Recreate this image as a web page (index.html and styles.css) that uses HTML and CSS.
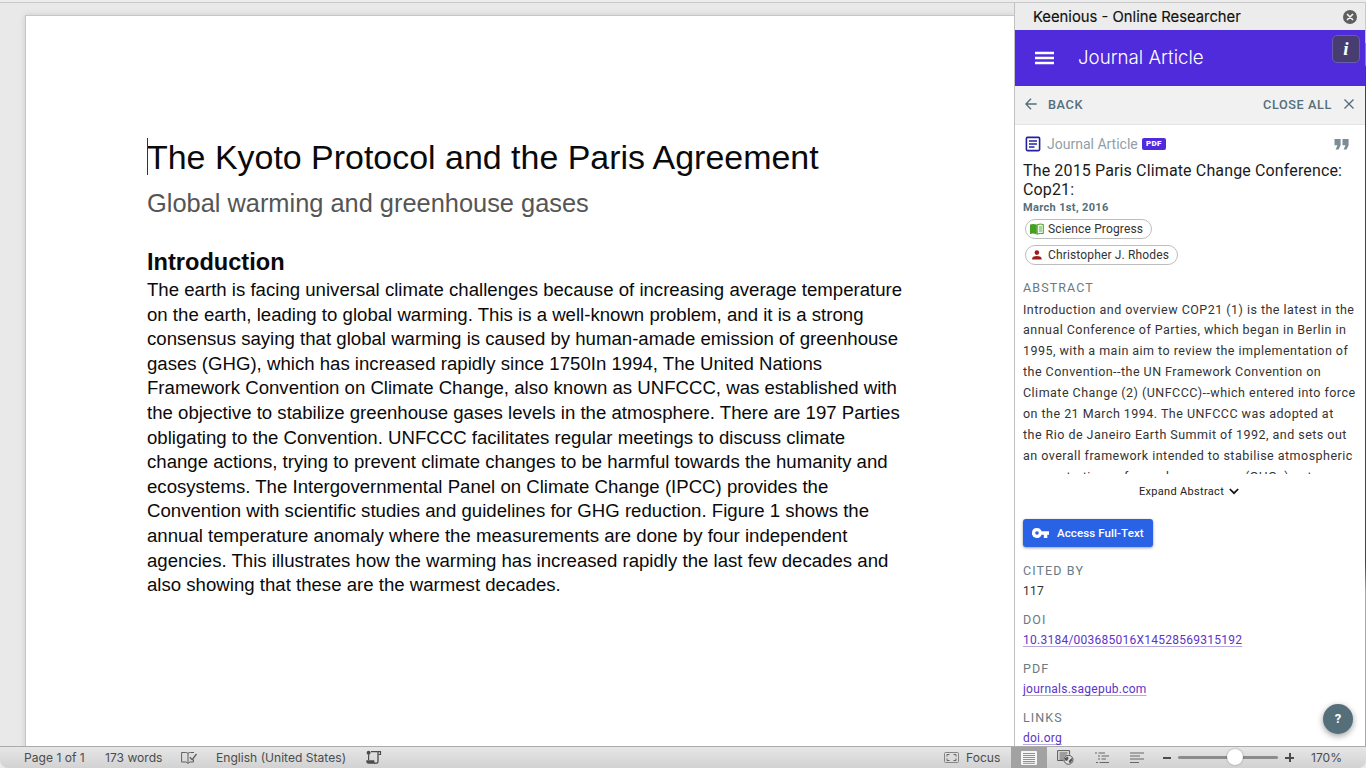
FILE: index.html
```html
<!DOCTYPE html>
<html lang="en">
<head>
<meta charset="utf-8">
<title>The Kyoto Protocol and the Paris Agreement</title>
<link rel="stylesheet" href="styles.css">
</head>
<body>
<div class="app">
  <div class="topline"></div>
  <div class="workspace">
    <main class="canvas">
      <article class="page">
        <h1 class="title"><span class="caret"></span>The Kyoto Protocol and the Paris Agreement</h1>
        <p class="subtitle">Global warming and greenhouse gases</p>
        <h2 class="heading">Introduction</h2>
        <p class="body">The earth is facing universal climate challenges because of increasing average temperature<br>on the earth, leading to global warming. This is a well-known problem, and it is a strong<br>consensus saying that global warming is caused by human-amade emission of greenhouse<br>gases (GHG), which has increased rapidly since 1750In 1994, The United Nations<br>Framework Convention on Climate Change, also known as UNFCCC, was established with<br>the objective to stabilize greenhouse gases levels in the atmosphere. There are 197 Parties<br>obligating to the Convention. UNFCCC facilitates regular meetings to discuss climate<br>change actions, trying to prevent climate changes to be harmful towards the humanity and<br>ecosystems. The Intergovernmental Panel on Climate Change (IPCC) provides the<br>Convention with scientific studies and guidelines for GHG reduction. Figure 1 shows the<br>annual temperature anomaly where the measurements are done by four independent<br>agencies. This illustrates how the warming has increased rapidly the last few decades and<br>also showing that these are the warmest decades.</p>
      </article>
    </main>
    <aside class="panel">
      <div class="panel-title">
        <span class="panel-name">Keenious - Online Researcher</span>
        <svg class="close-dot" width="14" height="14" viewBox="0 0 14 14"><circle cx="7" cy="7" r="7" fill="#5e5e5e"/><path d="M4.5 4.5l5 5M9.5 4.5l-5 5" stroke="#f2f2f2" stroke-width="1.7" stroke-linecap="round"/></svg>
      </div>
      <header class="bar">
        <svg class="menu" width="20" height="14" viewBox="0 0 20 14"><path d="M0 2h19M0 7h19M0 12h19" stroke="#fff" stroke-width="2.4"/></svg>
        <span class="bar-title">Journal Article</span>
        <span class="info">i</span>
      </header>
      <nav class="nav">
        <svg class="back-icon" width="12" height="12" viewBox="0 0 12 12"><path d="M11.7 6H1M6 .8L.9 6 6 11.2" fill="none" stroke="#546e7a" stroke-width="1.4"/></svg>
        <span class="back">BACK</span>
        <span class="close-all">CLOSE ALL</span>
        <svg class="x-icon" width="10" height="10" viewBox="0 0 10 10"><path d="M.5.5l9 9M9.5.5l-9 9" stroke="#546e7a" stroke-width="1.4"/></svg>
      </nav>
      <section class="content">
        <div class="kind">
          <svg width="16" height="16" viewBox="0 0 16 16"><rect x="1.4" y="1.4" width="13.2" height="13.2" rx="1" fill="none" stroke="#2323a0" stroke-width="1.6"/><path d="M4 5h8M4 8h8M4 11h5.5" stroke="#2323a0" stroke-width="1.5"/></svg>
          <span class="kind-label">Journal Article</span>
          <span class="pdf">PDF</span>
          <svg class="quote" width="15" height="11" viewBox="0 0 15 11"><path d="M1.6 10.500h3L6.600 6.200V0H.5v6.200h3zM9.600 10.500h3L14.600 6.200V0H8.500v6.200h3z" fill="#7c8d97"/></svg>
        </div>
        <h3 class="paper">The 2015 Paris Climate Change Conference:<br>Cop21:</h3>
        <div class="date">March 1st, 2016</div>
        <div class="chip">
          <svg width="14" height="12" viewBox="0 0 14 12"><path d="M0 1.500Q3.500.3 6.800 1.600V11.500Q3.500 10 0 11z" fill="#43a021"/><path d="M7.200 1.700Q10.200.5 13.300 1.500V10.600Q10.200 10 7.200 11.200z" fill="#eef7ea" stroke="#43a021" stroke-width="1"/><path d="M9 4h3M9 6h3M9 8h3" stroke="#43a021" stroke-width=".8"/></svg>
          <span>Science Progress</span>
        </div>
        <div class="chip second">
          <svg width="14" height="12" viewBox="0 0 14 12"><circle cx="6.900" cy="3.600" r="2.300" fill="#9c1b1b"/><path d="M2.200 10.500V9.400C2.200 7.800 5 7 6.900 7s4.700.8 4.700 2.400v1.100z" fill="#9c1b1b"/></svg>
          <span>Christopher J. Rhodes</span>
        </div>
        <h4 class="label">ABSTRACT</h4>
        <p class="abstract">Introduction and overview COP21 (1) is the latest in the<br>annual Conference of Parties, which began in Berlin in<br>1995, with a main aim to review the implementation of<br>the Convention--the UN Framework Convention on<br>Climate Change (2) (UNFCCC)--which entered into force<br>on the 21 March 1994. The UNFCCC was adopted at<br>the Rio de Janeiro Earth Summit of 1992, and sets out<br>an overall framework intended to stabilise atmospheric<br>concentrations of greenhouse gases (GHGs) not a</p>
        <div class="expand"><span>Expand Abstract</span><svg width="10" height="7" viewBox="0 0 10 7"><path d="M.8 1l4.200 4.200L9.200 1" fill="none" stroke="#111" stroke-width="1.700"/></svg></div>
        <div class="access">
          <svg width="17" height="10" viewBox="0 0 17 10"><path fill-rule="evenodd" d="M5 0a5 5 0 0 1 4.600 3.300H17v3.400h-1.700V10h-3.500V6.700H9.600A5 5 0 1 1 5 0zm0 3.200a1.800 1.800 0 1 0 0 3.600 1.800 1.800 0 0 0 0-3.600z" fill="#fff"/></svg>
          <span>Access Full-Text</span>
        </div>
        <dl class="facts">
          <dt>CITED BY</dt><dd>117</dd>
          <dt>DOI</dt><dd><a>10.3184/003685016X14528569315192</a></dd>
          <dt>PDF</dt><dd><a>journals.sagepub.com</a></dd>
          <dt>LINKS</dt><dd><a>doi.org</a></dd>
        </dl>
      </section>
      <div class="help">?</div>
    </aside>
    <div class="edge"></div>
  </div>
  <footer class="status">
    <span class="s-page">Page 1 of 1</span>
    <span class="s-words">173 words</span>
    <svg class="s-proof" width="17" height="14" viewBox="0 0 17 14" fill="none" stroke="#5f5f5f"><path d="M7 12.500V2.300Q6 1.500 4.500 1.500H.6V11H4.500Q6 11 7 12.500zM7 12.500Q8 11 9.500 11H12.500V8.500M7 2.300Q8 1.500 9.500 1.500H13"/><path d="M8.800 6.200l2.400 2.500L15.500 3" stroke-width="1.300"/></svg>
    <span class="s-lang">English (United States)</span>
    <svg class="s-macro" width="16" height="15" viewBox="0 0 16 15"><circle cx="2.600" cy="2.800" r="2" fill="#4c4c4c"/><path d="M2.600 4.500V10M5 1.700H14.500V4.500H12.500" fill="none" stroke="#4c4c4c" stroke-width="1.200"/><path d="M12 2V11.500Q12 13.200 10.300 13.200H8" fill="none" stroke="#4c4c4c" stroke-width="1.300"/><path d="M.3 10.300h8v1.200q0 2.300 2 2.300H2.500Q.3 13.800.3 11.500z" fill="#4c4c4c"/></svg>
    <svg class="s-focus-icon" width="15" height="11" viewBox="0 0 15 11"><rect x=".5" y=".5" width="14" height="10" rx="1" fill="none" stroke="#858585"/><path d="M3 4.500V2.500h2.500M9.500 2.500H12v2M12 6.500v2H9.500M5.500 8.500H3v-2" fill="none" stroke="#666"/></svg>
    <span class="s-focus">Focus</span>
    <span class="view"><svg width="16" height="14" viewBox="0 0 16 14"><rect width="16" height="14" rx="1" fill="#f5f5f5"/><path d="M2 2.500h12M2 4.500h12M2 6.500h12M2 8.500h12M2 10.500h12M2 12.300h12" stroke="#777" stroke-width=".8"/></svg></span>
    <svg class="s-web" width="17" height="15" viewBox="0 0 17 15"><path d="M6.500 10.500H.6V.6h12V4.500M2.500 3h8M2.500 5h7M2.500 7h5M2.500 9h4" fill="none" stroke="#5a5a5a"/><circle cx="11.500" cy="9.800" r="4.500" fill="#dedede" stroke="#555"/><path d="M8 8l3-1.500.5 2-1.500 2.500-2-.8zM11.800 11l2.700-3 1 2-2 3-1.500-.5z" fill="#555"/></svg>
    <svg class="s-outline" width="16" height="12" viewBox="0 0 16 12"><path d="M1 1h2M4.500 1H11M4 4h2M7.500 4H15M4 7h2M7.500 7H12M2 10.500h2M5.500 10.500H15" stroke="#666"/></svg>
    <svg class="s-draft" width="14" height="12" viewBox="0 0 14 12"><path d="M0 1h14M0 4h10M0 7h14M0 10.500h9" stroke="#666" stroke-width="1.100"/></svg>
    <span class="minus"></span>
    <span class="slider"><span class="knob"></span></span>
    <span class="plus"></span>
    <span class="zoom">170%</span>
  </footer>
</div>
</body>
</html>
```
FILE: styles.css
```css
* { box-sizing: border-box; }
body { margin: 0; width: 1366px; height: 768px; overflow: hidden; background: #ebebeb; }
h1, h2, h3, h4, p, dl, dt, dd { margin: 0; font-weight: 400; white-space: nowrap; }
svg { display: block; flex: none; }
.app { display: flex; flex-direction: column; height: 768px; }
.topline { height: 3px; flex: none; background: #ececec; border-bottom: 1px solid #c9c9c9; }
.workspace { display: flex; height: 743px; flex: none; }
.canvas { width: 1014px; flex: none; background: #e9e9e9; padding: 12px 0 0 25px; overflow: hidden; }
.page { height: 740px; background: #fff; border-left: 1px solid #c6c6c6; border-top: 1px solid #c6c6c6; box-shadow: 0 0 6px rgba(0,0,0,.13); padding: 118px 0 0 121px; font-family: "Liberation Sans", Arial, sans-serif; color: #0a0a0a; }
.title { position: relative; height: 46px; line-height: 46px; font-size: 33.95px; }
.caret { position: absolute; left: 0; top: 4px; width: 1px; height: 37px; background: #333; }
.subtitle { height: 46px; line-height: 46px; font-size: 25.4px; color: #555; }
.heading { margin-top: 13px; height: 46px; line-height: 46px; font-size: 23.6px; font-weight: 700; }
.body { margin-top: -7px; font-size: 18.62px; line-height: 24.6px; }
.panel { position: relative; width: 351px; flex: none; display: flex; flex-direction: column; background: #fff; border-left: 1px solid #c0c0c0; font-family: Roboto, sans-serif; overflow: hidden; }
.edge { width: 1px; background: linear-gradient(#c8c8c8 0 40px, #8a80c0 40px 62px, #444 64px 560px, #aaa 590px 100%); }
.panel-title { height: 27px; flex: none; display: flex; align-items: center; justify-content: space-between; padding: 0 8px 0 18px; background: #ececec; color: #111; }
.panel-name { padding-top: 2px; font: 14.800px/27px Inter, sans-serif; -webkit-text-stroke: .15px #111; }
.bar { position: relative; height: 56px; flex: none; display: flex; align-items: center; padding-left: 20px; background: #4f2bdc; color: #fff; }
.bar-title { margin-left: 23px; font: 300 18.700px/54px Inter, sans-serif; }
.info { position: absolute; right: 5px; top: 5px; width: 28px; height: 28px; border-radius: 5px; background: #483d70; border: 1px solid #6a5bb0; text-align: center; font: italic 700 19px/26px "Liberation Serif", serif; }
.nav { height: 39px; flex: none; display: flex; align-items: center; padding: 0 11px 2px 10px; background: #f1f1f1; border-bottom: 1px solid #e4e4e4; color: #546e7a; font-size: 12.700px; font-weight: 500; letter-spacing: .6px; }
.back { margin-left: 11px; }
.close-all { margin-left: auto; margin-right: 12px; }
.content { padding: 9px 8px 0; flex: 1; min-height: 0; }
.kind { height: 19px; display: flex; align-items: center; padding-left: 2px; }
.kind-label { margin-left: 6px; font-size: 14px; color: #90a0a9; letter-spacing: 0; }
.pdf { margin-left: 4px; width: 24px; height: 12px; border-radius: 2px; background: #4f2bdc; color: #fff; font-size: 8px; font-weight: 900; line-height: 12px; text-align: center; letter-spacing: .3px; }
.quote { margin: 2px 8px 0 auto; }
.paper { margin-top: 8px; font-size: 16px; line-height: 19px; letter-spacing: .14px; color: #1b1b1b; }
.date { padding-top: 1px; height: 16px; font-size: 11px; line-height: 16px; font-weight: 700; letter-spacing: .35px; color: #546e7a; }
.chip { width: max-content; height: 20px; margin: 4px 0 0 2px; border: 1px solid #bdbdbd; border-radius: 10px; display: flex; align-items: center; gap: 4px; padding: 0 8px 0 4px; font-size: 12px; line-height: 18px; letter-spacing: .15px; color: #333; }
.second { margin-top: 6px; }
.label, .facts dt { font-size: 12.500px; line-height: 20px; letter-spacing: 1.100px; color: #6a7a82; }
.label { margin-top: 13px; }
.abstract { margin-top: 1px; padding-top: .5px; height: 175px; overflow: hidden; font-size: 12.500px; line-height: 20.950px; letter-spacing: .47px; color: #333; }
.expand { height: 35px; display: flex; align-items: center; justify-content: center; gap: 5px; padding-right: 2px; font-size: 11px; letter-spacing: .32px; color: #222; }
.access { width: 130px; height: 28px; margin-top: 10px; border-radius: 3px; background: #2962e5; box-shadow: 0 1px 3px rgba(0,0,0,.4); display: flex; align-items: center; gap: 8px; padding-left: 9px; color: #fff; font-size: 11.500px; font-weight: 500; letter-spacing: .1px; white-space: nowrap; }
.facts { margin-top: 14px; }
.facts dd { height: 20px; margin-bottom: 9px; font-size: 12px; line-height: 20px; letter-spacing: .25px; color: #333; }
.facts a { color: #5a35c8; text-decoration: underline 1px #b8aae0; text-underline-offset: 2px; text-decoration-skip-ink: none; }
.help { position: absolute; left: 308px; top: 701px; width: 30px; height: 30px; border-radius: 50%; background: #546e7a; box-shadow: 0 2px 6px rgba(0,0,0,.4); color: #fff; font-size: 13px; font-weight: 700; line-height: 30px; text-align: center; }
.status { height: 22px; flex: none; display: flex; align-items: center; padding: 0 0 0 24px; border-top: 1px solid #a9aca9; border-radius: 0 0 8px 8px; background: linear-gradient(#e6e6e6, #d2d2d2); color: #4c4c4c; font: 12.100px/20px Inter, sans-serif; white-space: nowrap; }
.s-page { width: 81px; }
.s-words { width: 76px; }
.s-proof { margin-right: 18px; }
.s-lang { width: 150px; }
.s-focus-icon { margin-left: auto; margin-right: 7px; }
.s-focus { width: 45px; }
.view { width: 36px; height: 21px; display: flex; align-items: center; justify-content: center; background: #a2a2a2; }
.s-web { margin-left: 10px; }
.s-outline { margin-left: 20px; }
.s-draft { margin-left: 20px; }
.minus { width: 8px; height: 2px; margin-left: 19px; background: #4c4c4c; }
.slider { position: relative; width: 100px; height: 3px; margin-left: 7px; border-radius: 2px; background: #8c8c8c; }
.knob { position: absolute; left: 49px; top: -7px; width: 16px; height: 16px; border-radius: 50%; background: #fff; box-shadow: 0 0 2px rgba(0,0,0,.4); }
.plus { width: 9px; height: 9px; margin-left: 7px; background: linear-gradient(#4c4c4c, #4c4c4c) center / 9px 2px no-repeat, linear-gradient(#4c4c4c, #4c4c4c) center / 2px 9px no-repeat; }
.zoom { width: 72px; padding-left: 17px; }
```
